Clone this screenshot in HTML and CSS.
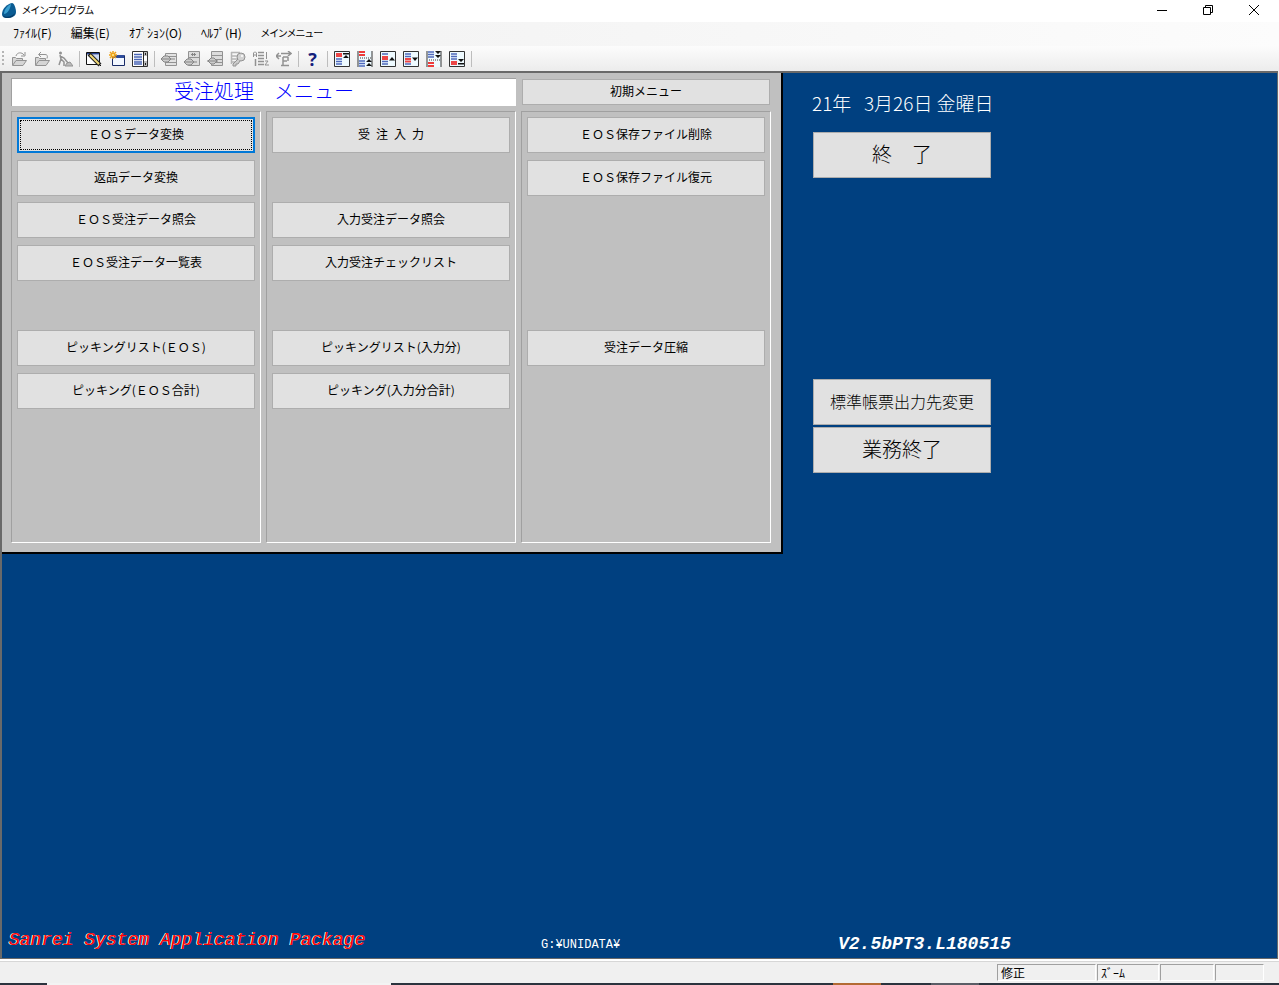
FILE: index.html
```html
<!DOCTYPE html>
<html lang="ja">
<head>
<meta charset="utf-8">
<title>メインプログラム</title>
<link rel="stylesheet" href="styles.css">
</head>
<body>
<header class="titlebar">
  <svg class="app-icon" viewBox="0 0 16 17"><path d="M11 1C6 2 1 7 1 12c0 3 2 4 5 4 5 0 9-2 9-6 0-4-2-9-4-9z" fill="#0b5c93"/><path d="M10 2C6 4 3 8 3 12c2 0 6-3 7-10z" fill="#3a9fd0"/><path d="M2 13c2 3 9 2 12-2-1 4-5 5-8 5-2 0-4-1-4-3z" fill="#073b66"/></svg>
  <h1 class="app-title">メインプログラム</h1>
  <div class="window-controls">
    <button class="win-btn" aria-label="最小化"><svg viewBox="0 0 12 12"><path d="M1 6.5h10" stroke="#000"/></svg></button>
    <button class="win-btn" aria-label="元に戻す"><svg viewBox="0 0 12 12"><path d="M1.500 3.500h7v7h-7zM3.500 3V1.500h7v7H9" fill="none" stroke="#000"/></svg></button>
    <button class="win-btn" aria-label="閉じる"><svg viewBox="0 0 12 12"><path d="M1 1l10 10M11 1L1 11" stroke="#000"/></svg></button>
  </div>
</header>
<nav class="menubar">
  <button class="menu-item">ﾌｧｲﾙ(F)</button>
  <button class="menu-item">編集(E)</button>
  <button class="menu-item">ｵﾌﾟｼｮﾝ(O)</button>
  <button class="menu-item">ﾍﾙﾌﾟ(H)</button>
  <button class="menu-item menu-item-kana">メインメニュー</button>
</nav>
<div class="toolbar">
  <span class="grip"></span>
  <button class="tool" aria-label="開く"><svg viewBox="0 0 16 16"><path d="M1.500 14V6.500h3l1 1h6V9M1.500 14.500L5 9.500h10.500l-3.500 5z" fill="#d5d5d5" stroke="#929292"/><path d="M5 5c1-4 6-4 8-1M14 1v4h-4" fill="none" stroke="#929292"/></svg></button>
  <button class="tool" aria-label="閉じる"><svg viewBox="0 0 16 16"><path d="M1.500 14V6.500h3l1 1h6V9M1.500 14.500L5 9.500h10.500l-3.500 5z" fill="#d5d5d5" stroke="#929292"/><path d="M5 3.500h6c2 0 3 1 2 4M7 1L4.500 3.500 7 6" fill="none" stroke="#929292"/></svg></button>
  <button class="tool" aria-label="実行"><svg viewBox="0 0 16 16"><circle cx="3.500" cy="2" r="1.500" fill="#929292"/><path d="M3 4l1 4-2 6M4 8l3 3v4M3 5l4 2 4 5" fill="none" stroke="#929292" stroke-width="1.500"/><path d="M8 15l2-3 3-1 3 4z" fill="#bbb" stroke="#929292"/></svg></button>
  <span class="sep"></span>
  <button class="tool" aria-label="編集"><svg viewBox="0 0 16 16"><path d="M.5 1.500h13v12H.5z" fill="#fff" stroke="#111"/><path d="M1 2h12v1.500H1z" fill="#25408f"/><path d="M7 4h6v7z" fill="#cbd9f2"/><path d="M3 3l11 11" stroke="#222" stroke-width="4"/><path d="M4 4l9 9" stroke="#f2da76" stroke-width="2"/><path d="M13 13l2 2" stroke="#111"/></svg></button>
  <button class="tool" aria-label="新規"><svg viewBox="0 0 16 16"><path d="M3.500 4.500h12v10h-12z" fill="#f2f7ff" stroke="#182b67"/><path d="M4 4h11v3H4z" fill="#2d4c9b"/><path d="M4 0v8M0 4h8M1 1l6 6M7 1L1 7" stroke="#eda21a" stroke-width="1.500"/><circle cx="4" cy="4" r="1" fill="#fff29b"/></svg></button>
  <button class="tool" aria-label="一覧"><svg viewBox="0 0 16 16"><path d="M.5.500h15v15H.5z" fill="#fff" stroke="#333"/><path d="M2 3.500h8M2 6h8M2 8.500h8M2 11h8M2 13h8" stroke="#4864b5" stroke-width="1.500"/><path d="M11.500 1v14" stroke="#222"/><path d="M12 1h3v14h-3z" fill="#bbb"/><path d="M12 5h3v5h-3z" fill="#fff"/><path d="M13.500 2v2M13.500 12v2" stroke="#222"/></svg></button>
  <span class="sep"></span>
  <button class="tool" aria-label="挿入"><svg viewBox="0 0 16 16"><path d="M4.500 2.500h11v12h-11z" fill="#e2e2e2" stroke="#929292"/><path d="M5 5.500h10M5 11.500h10" stroke="#929292"/><path d="M3 5h4l3 3-3 3H3L0 8z" fill="#ccc" stroke="#858585"/><path d="M0 8h14" stroke="#858585"/></svg></button>
  <button class="tool" aria-label="追加"><svg viewBox="0 0 16 16"><path d="M4.500.500h11v14h-11z" fill="#dcdcdc" stroke="#929292"/><path d="M5 6.500h10" stroke="#929292"/><path d="M3 8h4l3 3-3 3H3l-3-3z" fill="#ccc" stroke="#858585"/><path d="M0 11h13M8 2l3 3M11 2L8 5M7 3.500h5" stroke="#858585"/></svg></button>
  <button class="tool" aria-label="行"><svg viewBox="0 0 16 16"><path d="M4.500.500h11v14h-11z" fill="#dcdcdc" stroke="#929292"/><path d="M5 4.500h10M5 8.500h10M7 11.500h8" stroke="#929292"/><path d="M4 7h3l3 3-3 3H4l-3-3z" fill="#ccc" stroke="#858585"/><path d="M0 10h11" stroke="#858585"/></svg></button>
  <button class="tool" aria-label="キー"><svg viewBox="0 0 16 16"><path d="M1 1.500h9M1 5h7M1 8h6M1 11h4M1.500 1v12" stroke="#b5b5b5" stroke-width="1.500"/><circle cx="11" cy="6" r="4" fill="#d2d2d2" stroke="#929292"/><path d="M8 8l-5 5v2h3v-2h2l2-3" fill="#ccc" stroke="#929292"/><circle cx="12" cy="5" r="1" fill="#fff"/></svg></button>
  <button class="tool" aria-label="並べ替え"><svg viewBox="0 0 16 16"><path d="M.5 6V2l1-1h1l1 1v4M1 4h3M12 10h3l-3 4h4M13.500 1v7" fill="none" stroke="#929292"/><path d="M5 1.500h6M5 4.500h6M5 7.500h6M5 10.500h6M5 13.500h6M2.500 8v7" stroke="#929292" stroke-width="1.500"/></svg></button>
  <button class="tool" aria-label="移動"><svg viewBox="0 0 16 16"><path d="M0 5h5M3 2L0 5l3 3M5 2.500h9M12 0l3 2.500L12 5M7 6v8M7 6h5M7 10h4M5 14.500h8M12 6v4" fill="none" stroke="#929292" stroke-width="1.500"/></svg></button>
  <span class="sep"></span>
  <button class="tool tool-help" aria-label="ヘルプ">?</button>
  <span class="sep"></span>
  <button class="tool" aria-label="先頭"><svg viewBox="0 0 16 16"><use href="#frame"/><path d="M2 3h6M2 5h6" stroke="#ed4545" stroke-width="2"/><path d="M2 8h6M2 10.500h6M2 13h6" stroke="#4f69bc" stroke-width="1.500"/><path d="M9 2h6v1.500H9zM12 4L9 7h6z" fill="#111"/></svg></button>
  <button class="tool" aria-label="前ページ"><svg viewBox="0 0 16 16"><path d="M1 0h14v16H1z" fill="#eefaff"/><path d="M1 0v16M15 0v16" stroke="#333"/><path d="M2 1h6M2 4h6" stroke="#ed3b3b" stroke-width="2"/><path d="M1 7h14" stroke="#999" stroke-width="2" stroke-dasharray="1 1"/><path d="M2 10h6M2 12.500h6M2 15h6" stroke="#4f69bc" stroke-width="1.500"/><path d="M12 8l-3 3h6zM12 12l-3 3h6z" fill="#111"/></svg></button>
  <button class="tool" aria-label="前"><svg viewBox="0 0 16 16"><use href="#frame"/><path d="M2 3h6M2 10.500h6M2 13h6" stroke="#4f69bc" stroke-width="1.500"/><path d="M2 6h6M2 8h6" stroke="#ed4545" stroke-width="2"/><path d="M12 6L9 9.500h6z" fill="#111"/></svg></button>
  <button class="tool" aria-label="次"><svg viewBox="0 0 16 16"><use href="#frame"/><path d="M2 3h6M2 5.500h6M2 13h6" stroke="#4f69bc" stroke-width="1.500"/><path d="M2 8h6M2 10.500h6" stroke="#ed4545" stroke-width="2"/><path d="M9 6.500h6L12 10z" fill="#111"/></svg></button>
  <button class="tool" aria-label="次ページ"><svg viewBox="0 0 16 16"><path d="M1 0h14v16H1z" fill="#eefaff"/><path d="M1 0v16M15 0v16" stroke="#333"/><path d="M2 1h6M2 3.500h6M2 6h6" stroke="#4f69bc" stroke-width="1.500"/><path d="M9 0h6l-3 3zM9 4h6l-3 3z" fill="#111"/><path d="M1 9h14" stroke="#999" stroke-width="2" stroke-dasharray="1 1"/><path d="M2 12h6M2 15h6" stroke="#ed3b3b" stroke-width="2"/></svg></button>
  <button class="tool" aria-label="末尾"><svg viewBox="0 0 16 16"><g id="frame"><path d="M.5.500h15v15H.5z" fill="#eefaff" stroke="#333"/></g><path d="M2 3h6M2 5.500h6M2 8h6" stroke="#4f69bc" stroke-width="1.500"/><path d="M2 11h6M2 13h6" stroke="#ed4545" stroke-width="2"/><path d="M9 8h6l-3 3zM9 12h6v1.500H9z" fill="#111"/></svg></button>
  <span class="sep"></span>
</div>
<main class="desktop">
  <div class="workspace">
    <section class="panel">
      <h2 class="panel-title">受注処理　メニュー</h2>
      <button class="btn btn-initial">初期メニュー</button>
      <div class="group">
        <button class="btn btn-focus row-1">ＥＯＳデータ変換</button>
        <button class="btn row-2">返品データ変換</button>
        <button class="btn row-3">ＥＯＳ受注データ照会</button>
        <button class="btn row-4">ＥＯＳ受注データ一覧表</button>
        <button class="btn row-6">ピッキングリスト(ＥＯＳ)</button>
        <button class="btn row-7">ピッキング(ＥＯＳ合計)</button>
      </div>
      <div class="group">
        <button class="btn row-1">受&ensp;注&ensp;入&ensp;力</button>
        <button class="btn row-3">入力受注データ照会</button>
        <button class="btn row-4">入力受注チェックリスト</button>
        <button class="btn row-6">ピッキングリスト(入力分)</button>
        <button class="btn row-7">ピッキング(入力分合計)</button>
      </div>
      <div class="group">
        <button class="btn row-1">ＥＯＳ保存ファイル削除</button>
        <button class="btn row-2">ＥＯＳ保存ファイル復元</button>
        <button class="btn row-6">受注データ圧縮</button>
      </div>
    </section>
    <aside class="side">
      <p class="date">21年&nbsp;&nbsp; 3月26日 金曜日</p>
      <button class="btn btn-side">終　了</button>
      <div class="side-lower">
        <button class="btn btn-side btn-printer">標準帳票出力先変更</button>
        <button class="btn btn-side">業務終了</button>
      </div>
    </aside>
  </div>
  <footer class="credits">
    <span class="product">Sanrei System Application Package</span>
    <span class="path">G:¥UNIDATA¥</span>
    <span class="version">V2.5bPT3.L180515</span>
  </footer>
</main>
<div class="statusbar">
  <span class="cell cell-mode">修正</span>
  <span class="cell cell-zoom">ｽﾞｰﾑ</span>
  <span class="cell cell-blank"></span>
  <span class="cell cell-end"></span>
</div>
<div class="taskbar"><span class="task task-light"></span><span class="task task-orange"></span><span class="task task-gray"></span></div>
</body>
</html>
```

FILE: styles.css
```css
* { box-sizing: border-box; }
body {
  margin: 0;
  min-height: 100vh;
  display: flex;
  flex-direction: column;
  background: #f0f0f0;
  color: #000;
  font: 12px/16px "Noto Sans CJK JP", sans-serif;
}
button { font: inherit; color: inherit; border: 0; padding: 0; background: none; white-space: nowrap; }
h1, h2, p { margin: 0; font-weight: 400; }

.titlebar { display: flex; align-items: center; height: 22px; padding: 0 2px 2px 1px; background: #fff; }
.app-icon { width: 16px; height: 17px; margin-right: 5px; }
.app-title { font-size: 10px; line-height: 16px; font-feature-settings: "palt"; }
.window-controls { display: flex; margin-left: auto; }
.win-btn { width: 46px; height: 18px; display: grid; place-items: center; }
.win-btn svg { width: 12px; height: 12px; }

.menubar {
  display: flex;
  align-items: center;
  gap: 19px;
  height: 24px;
  padding: 0 0 2px 13px;
  background: linear-gradient(90deg, #f0f0f0, #fcfcfc);
}
.menu-item-kana { font-size: 10px; font-feature-settings: "palt"; }

.toolbar {
  display: flex;
  align-items: center;
  height: 25px;
  background: linear-gradient(#fcfcfc, #ececec);
}
.grip { width: 2px; height: 16px; margin: 0 3px 0 2px; background: repeating-linear-gradient(#b5b5b5 0 2px, transparent 2px 4px); }
.tool { width: 23px; height: 23px; display: grid; place-items: center; }
.tool svg { width: 16px; height: 16px; }
.tool-help { color: #14207c; font: bold 18px/20px "Open Sans", sans-serif; }
.sep { width: 1px; height: 16px; margin: 0 2px 0 3px; background: #bdbdbd; }

.desktop {
  flex: 1;
  display: flex;
  flex-direction: column;
  margin-right: 1px;
  background: #004080;
  border: 2px solid #696969;
  border-width: 2px 1px 1px 2px;
}
.workspace { display: flex; flex: 1; align-items: flex-start; }

.panel {
  display: grid;
  grid-template-columns: repeat(3, 250px);
  grid-template-rows: 28px auto;
  gap: 5px;
  padding: 5px 10px 9px 9px;
  background: #c0c0c0;
  border: solid #000;
  border-width: 0 2px 2px 0;
}
.panel-title {
  grid-column: span 2;
  color: #0000ff;
  background: #fff;
  border: solid #a0a0a0;
  border-width: 1px 0 0 1px;
  font-size: 20px;
  font-weight: 300;
  line-height: 24px;
  text-align: center;
}
.btn { background: #e1e1e1; border: 1px solid #adadad; padding-bottom: 2px; }
.btn-initial { margin: 1px; }
.group {
  display: grid;
  grid-template-rows: repeat(7, 36px);
  align-content: space-between;
  height: 432px;
  padding: 5px 5px 133px;
  border: 1px solid;
  border-color: #a0a0a0 #fff #fff #a0a0a0;
}
.row-1 { grid-row: 1; }
.row-2 { grid-row: 2; }
.row-3 { grid-row: 3; }
.row-4 { grid-row: 4; }
.row-6 { grid-row: 6; }
.row-7 { grid-row: 7; }
.btn-focus { border: 2px solid #0078d7; outline: 1px dotted #000; outline-offset: -4px; }

.side { padding: 18px 0 0 29px; }
.date { color: #fff; font-size: 19px; font-weight: 300; line-height: 24px; white-space: nowrap; }
.btn-side { display: block; width: 178px; height: 46px; font-size: 20px; font-weight: 300; line-height: 24px; }
.date + .btn-side { margin: 17px 0 0 1px; }
.side-lower { display: grid; gap: 2px; margin: 201px 0 0 1px; }
.btn-printer { font-size: 16px; }

.credits {
  display: grid;
  grid-template-columns: 532px 297px 1fr;
  align-items: end;
  padding: 0 0 4px 7px;
  color: #fff;
  font-family: "Liberation Mono", monospace;
}
.product { color: #f00; font-size: 18px; line-height: 28px; font-style: italic; text-shadow: -1px 0 #fff; }
.path { font-size: 12px; line-height: 18px; }
.version { font-size: 18px; line-height: 20px; font-weight: 700; font-style: italic; }

.statusbar {
  display: flex;
  justify-content: flex-end;
  gap: 1px;
  height: 24px;
  padding: 5px 15px 2px 0;
  background: linear-gradient(#fff 0 2px, #d7d7d7 2px 3px, #f0f0f0 3px);
}
.cell { border: 1px solid; border-color: #a0a0a0 #fff #fff #a0a0a0; padding-left: 3px; line-height: 15px; }
.cell-mode { width: 99px; }
.cell-zoom { width: 62px; }
.cell-blank { width: 54px; }
.cell-end { width: 49px; }

.taskbar { display: grid; grid-template-columns: 47px 344px 442px 48px 50px 48px 1fr; height: 2px; background: #2b333e; }
.task-light { grid-column: 2; background: #f3f3f3; }
.task-orange { grid-column: 4; background: #b36a33; }
.task-gray { grid-column: 6; background: #5a5d66; }
```
